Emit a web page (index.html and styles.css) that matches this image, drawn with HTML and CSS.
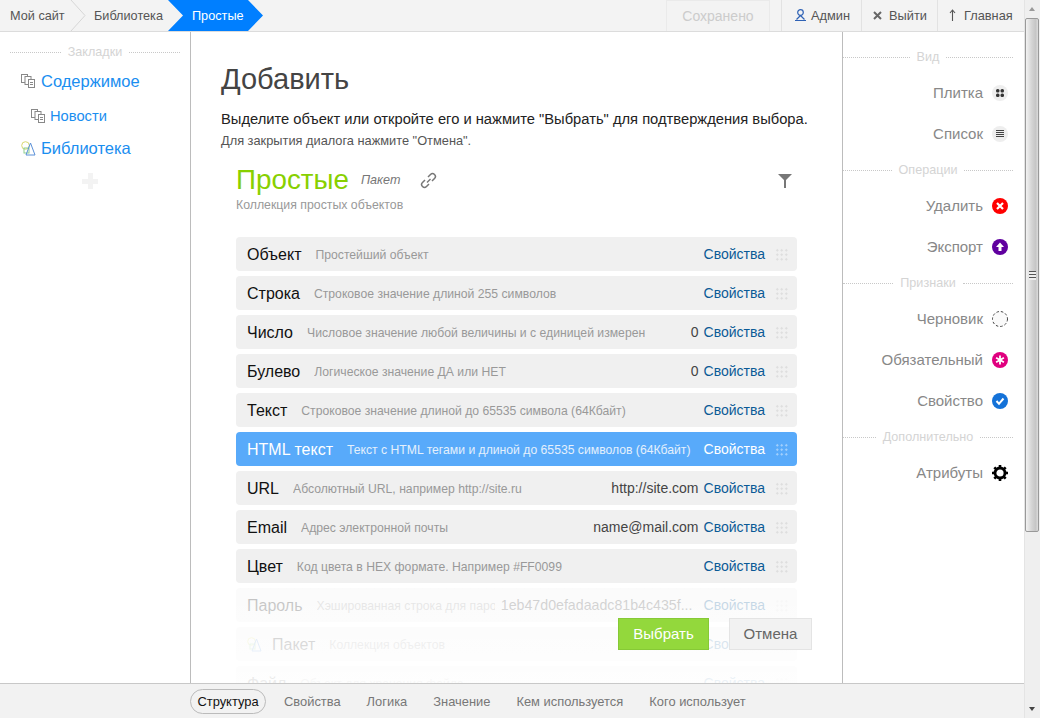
FILE: index.html
```html
<!DOCTYPE html>
<html lang="ru">
<head>
<meta charset="utf-8">
<title>Добавить</title>
<link rel="stylesheet" href="styles.css">
</head>
<body>
<div class="app">
  <div class="main">
    <header class="topbar">
      <nav class="crumbs">
        <a class="crumb first">Мой сайт<svg class="chev" width="16" height="31" viewBox="0 0 16 31"><path d="M1 0l14 15.500L1 31" fill="none" stroke="#d6d6d6"/></svg></a>
        <a class="crumb second">Библиотека</a>
        <a class="crumb current">Простые</a>
      </nav>
      <div class="top-actions">
        <span class="saved">Сохранено</span>
        <a class="top-link admin"><svg width="11" height="13" viewBox="0 0 11 13"><circle cx="5.500" cy="3.500" r="2.800" fill="none" stroke="#2f62b5" stroke-width="1.200"/><path d="M5.500 6.500L1.500 10.500M5.500 6.500l4 4M0 11.500h11" fill="none" stroke="#2f62b5" stroke-width="1.200"/></svg>Админ</a>
        <a class="top-link logout"><svg width="9" height="9" viewBox="0 0 9 9"><path d="M1 1l7 7M8 1L1 8" stroke="#666" stroke-width="2"/></svg>Выйти</a>
        <a class="top-link home"><svg width="7" height="13" viewBox="0 0 7 13"><path d="M3.500 12V1.500M1 4l2.500-3L6 4" fill="none" stroke="#555" stroke-width="1.100"/></svg>Главная</a>
      </div>
    </header>

    <div class="content">
      <aside class="left">
        <div class="sec-head">Закладки</div>
        <a class="tree t1"><svg class="ti" width="14" height="14" viewBox="0 0 14 14"><use href="#pages"/></svg>Содержимое</a>
        <a class="tree t2"><svg class="ti" width="14" height="14" viewBox="0 0 14 14"><use href="#pages"/></svg>Новости</a>
        <a class="tree t3"><svg class="ti" width="15" height="15" viewBox="0 0 15 15"><use href="#shapes"/></svg>Библиотека</a>
        <div class="plus"></div>
      </aside>

      <section class="dialog">
        <h1 class="d-title">Добавить</h1>
        <p class="d-lead">Выделите объект или откройте его и нажмите "Выбрать" для подтверждения выбора.</p>
        <p class="d-note">Для закрытия диалога нажмите "Отмена".</p>

        <div class="pack">
          <div class="pack-head">
            <span class="pack-name">Простые</span>
            <span class="pack-kind">Пакет</span>
            <svg class="pack-link" width="17" height="17" viewBox="0 0 17 17"><g fill="none" stroke="#777" stroke-width="1.500"><path d="M7 10.500l3.500-3.500"/><path d="M8 5l2.500-2.500a2.800 2.800 0 0 1 4 4L12 9"/><path d="M9 12l-2.500 2.500a2.800 2.800 0 0 1-4-4L5 8"/></g></svg>
            <svg class="pack-filter" width="14" height="14" viewBox="0 0 14 14"><path d="M0 0h14L8 6v8H6V6z" fill="#777"/></svg>
          </div>
          <div class="pack-sub">Коллекция простых объектов</div>

          <ul class="rows">
            <li class="row"><span class="r-name">Объект</span><span class="r-desc">Простейший объект</span><a class="r-link">Свойства</a><i class="grip"></i></li>
            <li class="row"><span class="r-name">Строка</span><span class="r-desc">Строковое значение длиной 255 символов</span><a class="r-link">Свойства</a><i class="grip"></i></li>
            <li class="row"><span class="r-name">Число</span><span class="r-desc">Числовое значение любой величины и с единицей измерения</span><span class="r-val short">0</span><a class="r-link">Свойства</a><i class="grip"></i></li>
            <li class="row"><span class="r-name">Булево</span><span class="r-desc">Логическое значение ДА или НЕТ</span><span class="r-val short">0</span><a class="r-link">Свойства</a><i class="grip"></i></li>
            <li class="row"><span class="r-name">Текст</span><span class="r-desc">Строковое значение длиной до 65535 символа (64Кбайт)</span><a class="r-link">Свойства</a><i class="grip"></i></li>
            <li class="row selected"><span class="r-name">HTML текст</span><span class="r-desc">Текст с HTML тегами и длиной до 65535 символов (64Кбайт)</span><a class="r-link">Свойства</a><i class="grip"></i></li>
            <li class="row"><span class="r-name">URL</span><span class="r-desc">Абсолютный URL, например http://site.ru</span><span class="r-val">http://site.com</span><a class="r-link">Свойства</a><i class="grip"></i></li>
            <li class="row"><span class="r-name">Email</span><span class="r-desc">Адрес электронной почты</span><span class="r-val">name@mail.com</span><a class="r-link">Свойства</a><i class="grip"></i></li>
            <li class="row"><span class="r-name">Цвет</span><span class="r-desc">Код цвета в HEX формате. Например #FF0099</span><a class="r-link">Свойства</a><i class="grip"></i></li>
            <li class="row"><span class="r-name">Пароль</span><span class="r-desc">Хэшированная строка для пароля</span><span class="r-val hash">1eb47d0efadaadc81b4c435f...</span><a class="r-link">Свойства</a><i class="grip"></i></li>
            <li class="row"><svg class="r-icon" width="15" height="15" viewBox="0 0 15 15"><use href="#shapes"/></svg><span class="r-name">Пакет</span><span class="r-desc">Коллекция объектов</span><a class="r-link">Свойства</a><i class="grip"></i></li>
            <li class="row"><span class="r-name">Файл</span><span class="r-desc">Объект для хранения файла</span><a class="r-link">Свойства</a><i class="grip"></i></li>
          </ul>
        </div>

        <div class="fade"></div>
        <div class="d-buttons">
          <button class="btn ok">Выбрать</button>
          <button class="btn cancel">Отмена</button>
        </div>
      </section>

      <aside class="right">
        <div class="sec-head first-sec">Вид</div>
        <a class="act"><span>Плитка</span><svg class="ic" width="16" height="16" viewBox="0 0 16 16"><circle cx="8" cy="8" r="8" fill="#eee"/><g fill="#333"><rect x="4" y="4" width="3.500" height="3.500" rx="1.500"/><rect x="8.500" y="4" width="3.500" height="3.500" rx="1.500"/><rect x="4" y="8.500" width="3.500" height="3.500" rx="1.500"/><rect x="8.500" y="8.500" width="3.500" height="3.500" rx="1.500"/></g></svg></a>
        <a class="act"><span>Список</span><svg class="ic" width="16" height="16" viewBox="0 0 16 16"><circle cx="8" cy="8" r="8" fill="#eee"/><path d="M4 4.500h8M4 6.500h8M4 8.500h8M4 10.500h8" stroke="#444" stroke-width="1"/></svg></a>
        <div class="sec-head">Операции</div>
        <a class="act"><span>Удалить</span><svg class="ic" width="16" height="16" viewBox="0 0 16 16"><circle cx="8" cy="8" r="8" fill="#f00"/><path d="M5 5l6 6M11 5l-6 6" stroke="#fff" stroke-width="2.200"/></svg></a>
        <a class="act"><span>Экспорт</span><svg class="ic" width="16" height="16" viewBox="0 0 16 16"><circle cx="8" cy="8" r="8" fill="#60009f"/><path d="M8 3.500L12 8H9.500v4h-3V8H4z" fill="#fff"/></svg></a>
        <div class="sec-head">Признаки</div>
        <a class="act"><span>Черновик</span><svg class="ic" width="16" height="16" viewBox="0 0 16 16"><circle cx="8" cy="8" r="7.500" fill="#fafafa" stroke="#444" stroke-dasharray="2.500 2"/></svg></a>
        <a class="act"><span>Обязательный</span><svg class="ic" width="16" height="16" viewBox="0 0 16 16"><circle cx="8" cy="8" r="8" fill="#e0007f"/><path d="M8 3.500v9M4.100 5.750l7.800 4.500M11.900 5.750l-7.800 4.500" stroke="#fff" stroke-width="1.800"/></svg></a>
        <a class="act"><span>Свойство</span><svg class="ic" width="16" height="16" viewBox="0 0 16 16"><circle cx="8" cy="8" r="8" fill="#1472d8"/><path d="M4.500 8l2.500 2.800L11.500 5.500" fill="none" stroke="#fff" stroke-width="2"/></svg></a>
        <div class="sec-head">Дополнительно</div>
        <a class="act"><span>Атрибуты</span><svg class="ic" width="16" height="16" viewBox="0 0 16 16"><circle cx="8" cy="8" r="5" fill="none" stroke="#000" stroke-width="2.800"/><path d="M8 0v3M8 13v3M0 8h3M13 8h3M2.300 2.300l2.200 2.200M11.500 11.500l2.200 2.200M13.700 2.300l-2.200 2.200M4.500 11.500l-2.200 2.200" stroke="#000" stroke-width="2.600"/></svg></a>
      </aside>
    </div>

    <footer class="tabs">
      <a class="tab active">Структура</a>
      <a class="tab">Свойства</a>
      <a class="tab">Логика</a>
      <a class="tab">Значение</a>
      <a class="tab">Кем используется</a>
      <a class="tab">Кого использует</a>
    </footer>
  </div>

  <div class="scrollbar">
    <span class="arrow up"></span>
    <div class="thumb"><span class="thumb-grip"></span></div>
    <span class="arrow down"></span>
  </div>
</div>

<svg class="defs" width="0" height="0">
  <defs>
    <g id="pages" fill="#fff" stroke="#888">
      <rect x="0.500" y="0.500" width="6" height="8"/>
      <rect x="4" y="2.500" width="6" height="8"/>
      <rect x="7.500" y="5.500" width="6" height="8"/>
      <path d="M9 8.500h3M9 10.500h3" fill="none"/>
    </g>
    <g id="shapes" fill="none">
      <circle cx="4.500" cy="4.500" r="3.800" stroke="#d8d870"/>
      <rect x="3" y="7" width="5" height="5" stroke="#8fd08f"/>
      <path d="M9.500 2L14 14H5z" stroke="#5a90d8"/>
    </g>
  </defs>
</svg>
</body>
</html>
```

FILE: styles.css
```css
* { box-sizing: border-box; }
html, body { margin: 0; height: 100%; overflow: hidden; }
body { font-family: "Liberation Sans", Arial, sans-serif; background: #fff; color: #333; }
a { text-decoration: none; cursor: default; }
ul { list-style: none; margin: 0; padding: 0; }
.defs { position: absolute; }

.app { display: flex; height: 718px; }
.main { flex: 1; min-width: 0; display: flex; flex-direction: column; }

/* Top bar */
.topbar { height: 32px; flex: none; display: flex; justify-content: space-between; background: #f3f3f3; border-bottom: 1px solid #dcdcdc; font-size: 12.800px; color: #555; }
.crumbs { display: flex; height: 31px; font-size: 12.700px; }
.crumb { display: flex; align-items: center; height: 31px; color: #555; }
.crumb.first { padding-left: 10px; width: 94px; gap: 5px; }
.crumb.second { width: 74px; white-space: nowrap; }
.crumb.current { width: 95px; padding-left: 24px; color: #fff; background: #007fff; clip-path: polygon(0 0, 80px 0, 95px 50%, 80px 100%, 0 100%, 15px 50%); }
.chev { flex: none; }
.top-actions { display: flex; height: 31px; align-items: stretch; }
.saved { width: 104px; margin-right: 11px; display: flex; align-items: center; justify-content: center; font-size: 14px; color: #ccc; border: 1px solid #eaeaea; border-width: 1px 1px 0; }
.top-link { display: flex; align-items: center; border-left: 1px solid #e2e2e2; color: #555; }
.admin { width: 80px; padding-left: 13px; gap: 5px; }
.logout { width: 76px; padding-left: 11px; gap: 7px; }
.home { width: 87px; padding-left: 11px; gap: 8px; }

/* Columns */
.content { flex: 1; min-height: 0; display: flex; }
.left { width: 190px; flex: none; padding-top: 13px; }
.right { width: 181px; flex: none; padding: 0 11px 0 0; }
.dialog { position: relative; width: 653px; flex: none; overflow: hidden; border-left: 1px solid #bcbcbc; border-right: 1px solid #bcbcbc; padding: 32px 0 0 30px; }

.sec-head { display: flex; align-items: center; gap: 7px; height: 14px; font-size: 12.600px; color: #d4d4d4; padding-left: 10px; padding-right: 10px; }
.sec-head::before, .sec-head::after { content: ""; flex: 1; border-top: 1px dotted #c8c8c8; }
.right .sec-head { padding: 0; margin-top: 19px; margin-bottom: 19px; }
.right .first-sec { margin-top: 18px; }

/* Tree */
.tree { display: flex; align-items: center; color: #1a8ef0; }
.ti { flex: none; }
.t1 { font-size: 16.500px; padding-left: 21px; gap: 6px; margin-top: 12px; height: 20px; }
.t2 { font-size: 14.700px; padding-left: 31px; gap: 5px; margin-top: 15px; height: 20px; }
.t3 { font-size: 16.500px; padding-left: 21px; gap: 5px; margin-top: 12px; height: 20px; }
.plus { width: 16px; height: 16px; margin: 15px 0 0 82px; background: linear-gradient(#f3f3f3, #f3f3f3) center / 16px 5px no-repeat, linear-gradient(#f3f3f3, #f3f3f3) center / 5px 16px no-repeat; }

/* Dialog */
.d-title { margin: -1px 0 0; font-weight: 400; font-size: 29px; line-height: 32px; color: #444; }
.d-lead { margin: 15px 0 0; font-size: 14.720px; line-height: 18px; color: #222; }
.d-note { margin: 6px 0 0; font-size: 12.800px; line-height: 14px; color: #555; }
.pack { width: 561px; margin: 15px 0 0 15px; }
.pack-head { display: flex; align-items: center; height: 34px; }
.pack-name { font-size: 27.800px; color: #88d000; }
.pack-kind { font-size: 12.600px; font-style: italic; color: #777; margin-left: 12px; }
.pack-link { margin-left: 20px; }
.pack-filter { margin-left: auto; margin-right: 5px; margin-top: 2px; }
.pack-sub { font-size: 12.300px; color: #999; line-height: 14px; margin-top: 1px; }
.rows { margin-top: 25px; display: flex; flex-direction: column; gap: 5px; }
.row { display: flex; align-items: center; height: 34px; flex: none; padding: 0 9px 0 11px; background: #f0f0f0; border-radius: 4px; }
.r-icon { flex: none; margin-right: 10px; }
.r-name { flex: none; font-size: 16px; color: #111; margin: 2px 14px 0 0; white-space: nowrap; }
.r-desc { flex: 1; min-width: 0; overflow: hidden; white-space: nowrap; font-size: 12.200px; color: #999; margin-top: 2px; }
.r-val { flex: none; font-size: 14px; color: #444; margin-left: 6px; text-align: right; }
.r-val.short { min-width: 48px; }
.r-val.hash { font-size: 14.200px; margin-right: 6px; }
.r-link { flex: none; font-size: 14px; color: #0b5a96; margin-left: 5px; margin-right: 10px; }
.grip { flex: none; width: 13px; height: 13px; background: radial-gradient(circle, #dcdcdc 1px, transparent 1.200px) 0 0 / 4.500px 4.500px; }
.row.selected { background: #58aafa; }
.selected .r-name, .selected .r-link { color: #fff; }
.selected .r-desc { color: #e4f0fc; }
.selected .grip { background-image: radial-gradient(circle, #a8d2fc 1px, transparent 1.200px); }

.fade { position: absolute; left: 0; right: 0; top: 552px; bottom: 0; background: linear-gradient(rgba(255, 255, 255, .72), rgba(255, 255, 255, .92)); }
.d-buttons { position: absolute; top: 586px; left: 427px; display: flex; gap: 20px; }
.btn { height: 32px; font: 15px "Liberation Sans", Arial, sans-serif; padding: 0 0 2px; }
.ok { width: 91px; background: #93d83c; border: 1px solid #86c936; color: #fff; }
.cancel { width: 83px; background: #f2f2f2; border: 1px solid #e4e4e4; color: #666; }

/* Right actions */
.act { display: flex; justify-content: flex-end; align-items: center; gap: 9px; height: 20px; padding-right: 5px; margin-bottom: 21px; font-size: 15px; color: #888; }
.act:has(+ .sec-head) { margin-bottom: 0; }
.act span { margin-bottom: 2px; }
.ic { flex: none; }

/* Bottom tabs */
.tabs { flex: none; height: 35px; display: flex; align-items: center; gap: 26px; padding-left: 190px; background: #f2f2f2; border-top: 1px solid #c8c8c8; font-size: 12.900px; color: #777; }
.tab { white-space: nowrap; }
.tab.active { display: flex; align-items: center; justify-content: center; width: 76px; height: 25px; margin-right: -8px; border: 1px solid #bbb; border-radius: 13px; color: #111; }

/* Scrollbar */
.scrollbar { position: relative; width: 16px; flex: none; background: #efefef; border-left: 1px solid #e4e4e4; }
.arrow { position: absolute; left: 4px; width: 0; height: 0; border-left: 3.500px solid transparent; border-right: 3.500px solid transparent; }
.arrow.up { top: 7px; border-bottom: 4px solid #999; }
.arrow.down { bottom: 7px; border-top: 4px solid #444; }
.thumb { position: absolute; top: 18px; left: 0; width: 14px; height: 514px; display: flex; align-items: center; justify-content: center; background: linear-gradient(90deg, #f2f2f2, #d6d6d6 45%, #c6c6c6 80%, #dcdcdc); border: 1px solid #999; border-radius: 2px; }
.thumb-grip { width: 7px; height: 9px; background: repeating-linear-gradient(#555 0 1px, #eee 1px 3px); }
```
